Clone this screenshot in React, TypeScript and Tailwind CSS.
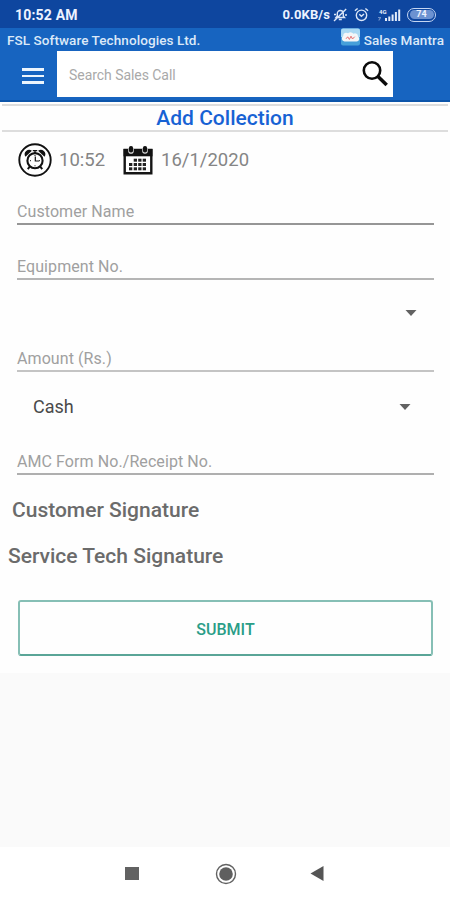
import React from "react";

function MutedBell() {
  return (
    <svg className="h-[14px] w-[14px] shrink-0" viewBox="0 0 14 14" fill="none" stroke="#dbe6f8" strokeWidth="1.4">
      <path d="M3 9.500h8.500L10.300 8V5.500A3 3 0 0 0 7.300 2.500 3 3 0 0 0 4.300 5.500V8zM5.800 11.500h3M1 13 13.200 1M1 6.500h2M12 7h2" />
    </svg>
  );
}

function StatusAlarm() {
  return (
    <svg className="h-[15px] w-[15px] shrink-0" viewBox="0 0 15 15" fill="none" stroke="#dbe6f8" strokeWidth="1.4">
      <circle cx="7.5" cy="8.3" r="5.2" />
      <path d="M5.3 7.2 7.4 9.2 10 6.9M.9 3.8 3.6 1.4M14.1 3.8l-2.7-2.4" />
    </svg>
  );
}

function Signal() {
  return (
    <svg className="h-[14px] w-[24px] shrink-0" viewBox="0 0 24 14" fill="#e3ecfa">
      <text x="2" y="6" fontSize="6" fontWeight="700" fontFamily="Roboto, sans-serif">4G</text>
      <path d="M1 9h3v1L2.500 12.500H1.200L2.500 10H1z" opacity=".45" />
      <path d="M8 10h2v3H8zM11.300 8.500h2V13h-2zM14.600 6.500h2V13h-2zM17.900 4h2v9h-2zM21.200 1.500h2V13h-2z" />
    </svg>
  );
}

function Logo() {
  return (
    <svg className="h-[18px] w-[19px] shrink-0" viewBox="0 0 19 18">
      <rect width="19" height="17" y=".5" rx="2" fill="#469fd9" />
      <path d="M0 2.500Q0 .5 2 .5h15q2 0 2 2V9H0z" fill="#a9d8f3" />
      <path d="M3.500 13.500a3 3 0 0 1-1.300-5.500A3 3 0 0 1 7 5.300a4 4 0 0 1 5.500.5A3 3 0 0 1 17 8.500a2.700 2.700 0 0 1-1.500 5z" fill="#f4f6f8" />
      <path d="m5 10.800 1.700-2 1.700 2.600L10 8.200l1.500 2.800 2.200-2.300" fill="none" stroke="#e66f6f" strokeWidth="1" />
    </svg>
  );
}

function AlarmClock() {
  return (
    <svg className="h-[34px] w-[34px] shrink-0" viewBox="0 0 34 34" fill="none" stroke="#111">
      <circle cx="17" cy="17" r="15.700" strokeWidth="1.900" />
      <circle cx="17" cy="17.700" r="7.600" strokeWidth="2.100" />
      <path d="M17.300 13.500V18H21" strokeWidth="1.200" />
      <path d="m11.800 23.500-2 2.700M22.200 23.500l2 2.700" strokeWidth="2" />
      <path d="M7.500 13.700a4.400 4.400 0 0 1 6.400-5.900zM26.500 13.700a4.400 4.400 0 0 0-6.400-5.900z" fill="#111" stroke="none" />
      <path d="M17 7.500v2.500M14.800 7.600h4.400" strokeWidth="1.300" />
      <path d="M17 12v1M12 17.700h1M21 17.700h1M17 22.300v1" strokeWidth="1" />
    </svg>
  );
}

function Calendar() {
  const cells = [
    [11.5, 12.7], [16, 12.7], [20.5, 12.7],
    [6.8, 17], [11.5, 17], [16, 17], [20.5, 17],
    [6.8, 21.3], [11.5, 21.3], [16, 21.3], [20.5, 21.3],
  ];
  return (
    <svg className="h-[29px] w-[30px] shrink-0" viewBox="0 0 30 29">
      <path d="M1.700 4h26.600v23.300H1.700z" fill="#fff" stroke="#151515" strokeWidth="2.400" />
      <path d="M.5 3h29v7.300H.5z" fill="#111" />
      <path d="M5.200 2.700h5.600v2.200a2.800 2.800 0 0 1-5.600 0zM19.200 2.700h5.600v2.200a2.800 2.800 0 0 1-5.600 0z" fill="#ddd" />
      <rect x="5.900" y="0" width="4.200" height="6.500" rx="2" fill="#111" />
      <rect x="19.900" y="0" width="4.200" height="6.500" rx="2" fill="#111" />
      {cells.map(([x, y], i) => (
        <rect key={i} x={x - 0.8} y={y} width="3.300" height="3" fill="#222" />
      ))}
    </svg>
  );
}

function Caret() {
  return (
    <svg className="h-[6px] w-[12px] shrink-0" viewBox="0 0 12 6">
      <path d="M.5 0h11L6 6z" fill="#626262" />
    </svg>
  );
}

function Field({ label, className }: { label: string; className: string }) {
  return (
    <div className={`mr-[16px] ml-[17px] flex shrink-0 items-end border-b-2 text-[16px] leading-5 tracking-[0.08px] text-[#a0a0a0] ${className}`}>
      <span className="whitespace-nowrap">{label}</span>
    </div>
  );
}

export default function App() {
  return (
    <div className="flex h-[900px] w-[450px] flex-col overflow-hidden bg-[#fafafa] font-['Roboto',sans-serif]">
      <div className="flex h-7 shrink-0 items-center bg-[#0e469f] pt-px pr-[14px] pl-[15px] text-[#edf3ff]">
        <span className="pt-px text-[14px] font-bold tracking-[0.2px]">10:52 AM</span>
        <span className="ml-auto text-[13px] font-bold tracking-[0.1px]">0.0KB/s</span>
        <span className="ml-[3px] flex"><MutedBell /></span>
        <span className="ml-[7px] flex"><StatusAlarm /></span>
        <span className="ml-[8px] flex"><Signal /></span>
        <span className="ml-[6px] flex h-[14px] w-[29px] items-center justify-center rounded-full border-[1.5px] border-[#c5d6f2] p-[1.5px]">
          <span className="flex h-full w-full items-center justify-center rounded-full bg-[#6c92d1] text-[9px] leading-none font-bold">74</span>
        </span>
      </div>

      <header className="flex h-[74px] shrink-0 flex-col border-b-2 border-[#0d55aa] bg-[#1764c0]">
        <div className="flex h-[23px] shrink-0 items-center pt-px pr-[6px] pl-[7px] text-[13.500px] font-medium text-[#dce9f8]">
          <span className="tracking-[0.08px]">FSL Software Technologies Ltd.</span>
          <span className="ml-auto flex -translate-y-[3px]"><Logo /></span>
          <span className="ml-[4px] tracking-[0.08px]">Sales Mantra</span>
        </div>
        <div className="flex h-[46px] items-center pl-[22px]">
          <div className="mt-[4px] flex w-[22px] flex-col gap-[4px]">
            <span className="h-[2.500px] bg-[#edf5fd]" />
            <span className="h-[2.500px] bg-[#edf5fd]" />
            <span className="h-[2.500px] bg-[#edf5fd]" />
          </div>
          <div className="ml-[13px] flex h-[46px] w-[336px] items-center bg-white pr-[4px] pl-[12px]">
            <span className="pt-[2px] text-[14px] tracking-[-0.05px] text-[#a9a9a9]">Search Sales Call</span>
            <svg className="ml-auto h-[28px] w-[28px]" viewBox="0 0 28 28" fill="none" stroke="#0b0b0b">
              <circle cx="11" cy="10.500" r="8.200" strokeWidth="2.600" />
              <path d="m17 16.500 8.700 8.500" strokeWidth="3.500" />
            </svg>
          </div>
        </div>
      </header>

      <main className="flex h-[571px] shrink-0 flex-col bg-[#fefefe]">
        <div className="mx-[2px] mt-[2px] flex h-[28px] shrink-0 items-center justify-center border-y-2 border-[#dddddd] pt-px text-[21px] font-medium text-[#1762d4]">
          Add Collection
        </div>
        <div className="flex h-[56px] shrink-0 items-center pl-[18px] text-[18.500px] text-[#858585]">
          <AlarmClock />
          <span className="ml-[7px] w-[64px] pt-[2px]">10:52</span>
          <Calendar />
          <span className="ml-[8px] pt-[2px]">16/1/2020</span>
        </div>
        <Field label="Customer Name" className="h-[37px] border-[#969696] pb-px" />
        <Field label="Equipment No." className="h-[55px] border-[#b5b5b5] pb-px" />
        <div className="flex h-[65px] shrink-0 items-center justify-end pr-[33px]"><Caret /></div>
        <Field label="Amount (Rs.)" className="h-[27px] border-[#c4c4c4] pb-px" />
        <div className="flex h-[70px] shrink-0 items-center justify-between pr-[39px] pl-[33px] text-[18px] text-[#4a4a4a]">
          <span className="-translate-y-px">Cash</span>
          <Caret />
        </div>
        <Field label="AMC Form No./Receipt No." className="h-[33px] border-[#afafaf] pb-px" />
        <h2 className="mt-[23px] ml-[12px] shrink-0 text-[21px] leading-6 font-medium text-[#6b6b6b]">Customer Signature</h2>
        <h2 className="mt-[22px] ml-[8px] shrink-0 text-[21px] leading-6 font-medium text-[#6b6b6b]">Service Tech Signature</h2>
        <button className="mr-[17px] ml-[18px] mt-[32px] h-[56px] shrink-0 rounded-[3px] border-2 border-[#86bfb5] border-b-[#5aa597] pt-[3px] text-[16px] font-medium text-[#2a9d87]">SUBMIT</button>
      </main>

      <nav className="mt-auto flex h-[53px] shrink-0 items-center bg-white pl-[125px]">
        <span className="h-[13px] w-[14px] bg-[#626262]" />
        <svg className="ml-[76px] h-[22px] w-[22px]" viewBox="0 0 22 22">
          <circle cx="11" cy="11" r="9.500" fill="none" stroke="#626262" strokeWidth="1.400" />
          <circle cx="11" cy="11" r="6.800" fill="#5f5f5f" />
        </svg>
        <svg className="ml-[73px] h-[15px] w-[14px]" viewBox="0 0 14 15">
          <path d="M.5 7.500 13.500 0v15z" fill="#555" />
        </svg>
      </nav>
    </div>
  );
}
